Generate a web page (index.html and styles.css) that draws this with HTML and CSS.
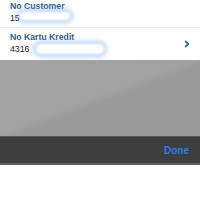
FILE: index.html
```html
<!DOCTYPE html>
<html>
<head>
<meta charset="utf-8">
<link rel="stylesheet" href="styles.css">
</head>
<body>
<div class="screen">
  <div class="list">
    <div class="row first">
      <div class="label">No Customer</div>
      <div class="value">15</div>
      <div class="blob blob1"></div>
    </div>
    <div class="row second">
      <div class="text">
        <div class="label">No Kartu Kredit</div>
        <div class="value">4316</div>
      </div>
      <svg class="chev" width="6" height="8" viewBox="0 0 6 8"><path d="M1.2 1 L4.2 4 L1.2 7" fill="none" stroke="#2f6ea6" stroke-width="1.8"/></svg>
      <div class="blob blob2"></div>
    </div>
  </div>
  <div class="dim"></div>
  <div class="toolbar"><span class="done">Done</span></div>
  <div class="rest"></div>
</div>
</body>
</html>
```

FILE: styles.css
```css
html, body { margin: 0; padding: 0; background: #fff; }
.screen { width: 200px; height: 200px; overflow: hidden; display: flex; flex-direction: column; font-family: "Liberation Sans", Arial, sans-serif; }
.list { height: 60px; background: #fff; display: flex; flex-direction: column; }
.row { position: relative; padding-left: 10px; box-sizing: border-box; }
.row.first { height: 28px; border-bottom: 1px solid #ececec; padding-top: 1px; }
.row.second { height: 32px; display: flex; align-items: flex-start; padding-top: 4px; padding-right: 10px; }
.row.second .text { flex: 1; }
.label { font-size: 8.7px; font-weight: bold; color: #2f6090; line-height: 10px; }
.value { font-size: 8.7px; color: #262626; line-height: 10px; margin-top: 2px; }
.chev { margin-top: 8px; }
.blob { position: absolute; background: #fff; border-radius: 5px; box-shadow: 0 0 4px 3px rgba(120,170,240,0.5); filter: blur(1px); }
.blob1 { left: 20px; top: 12px; width: 50px; height: 8px; }
.blob2 { left: 36px; top: 16px; width: 68px; height: 10px; }
.dim { height: 76px; background: linear-gradient(159deg, #a4a4a4 0%, #a1a1a1 49%, #9b9b9b 53%, #9a9a9a 100%); }
.toolbar { height: 29px; box-sizing: border-box; background: #3e3e3e; border-top: 1px solid #575757; border-bottom: 2px solid #5e5e5e; display: flex; justify-content: flex-end; align-items: center; padding-right: 11px; }
.done { font-size: 10px; font-weight: bold; color: #2e7be0; }
.rest { flex: 1; background: #fff; }
```
